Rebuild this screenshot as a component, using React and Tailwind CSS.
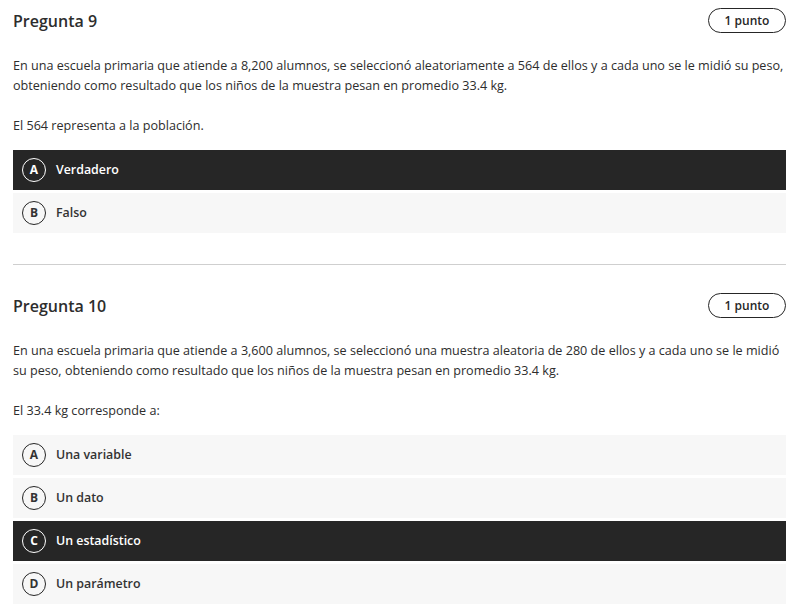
import React from "react";

const questions = [
  {
    title: "Pregunta 9",
    body: "En una escuela primaria que atiende a 8,200 alumnos, se seleccionó aleatoriamente a 564 de ellos y a cada uno se le midió su peso, obteniendo como resultado que los niños de la muestra pesan en promedio 33.4 kg.",
    prompt: "El 564 representa a la población.",
    options: [
      { letter: "A", text: "Verdadero", selected: true },
      { letter: "B", text: "Falso" },
    ],
  },
  {
    title: "Pregunta 10",
    body: "En una escuela primaria que atiende a 3,600 alumnos, se seleccionó una muestra aleatoria de 280 de ellos y a cada uno se le midió su peso, obteniendo como resultado que los niños de la muestra pesan en promedio 33.4 kg.",
    prompt: "El 33.4 kg corresponde a:",
    options: [
      { letter: "A", text: "Una variable" },
      { letter: "B", text: "Un dato" },
      { letter: "C", text: "Un estadístico", selected: true },
      { letter: "D", text: "Un parámetro" },
    ],
  },
];

function Option({ letter, text, selected }) {
  return (
    <div
      className={`h-[40px] flex items-center pl-[9px] gap-[10px] ${
        selected ? "bg-[#262626] text-white" : "bg-[#f7f7f7] text-[#333]"
      }`}
    >
      <span
        className={`w-[24px] h-[24px] rounded-full border-[1.5px] flex items-center justify-center text-[12px] font-bold ${
          selected ? "border-white" : "border-[#262626]"
        }`}
      >
        {letter}
      </span>
      <span className="text-[12.4px] font-semibold">{text}</span>
    </div>
  );
}

function Question({ title, body, prompt, options }) {
  return (
    <section>
      <div className="flex items-center justify-between h-[25px]">
        <h2 className="text-[16px] font-semibold text-[#2d2d2d]">{title}</h2>
        <span className="h-[25px] w-[78px] rounded-full border border-[#262626] flex items-center justify-center text-[12px] font-semibold text-[#262626]">
          1 punto
        </span>
      </div>
      <p className="mt-[23px] text-[12.6px] leading-[20px] text-[#2d2d2d]">{body}</p>
      <p className="mt-[20px] text-[12.6px] leading-[20px] text-[#2d2d2d]">{prompt}</p>
      <div className="mt-[14px] flex flex-col gap-[3px]">
        {options.map((o) => (
          <Option key={o.letter} {...o} />
        ))}
      </div>
    </section>
  );
}

export default function App() {
  return (
    <div
      className="min-h-screen bg-white px-[13px] pt-[8px] pr-[11px]"
      style={{ fontFamily: '"Open Sans", sans-serif' }}
    >
      <Question {...questions[0]} />
      <hr className="mt-[31px] mb-[28px] border-t border-[#cfcfcf]" />
      <Question {...questions[1]} />
    </div>
  );
}
